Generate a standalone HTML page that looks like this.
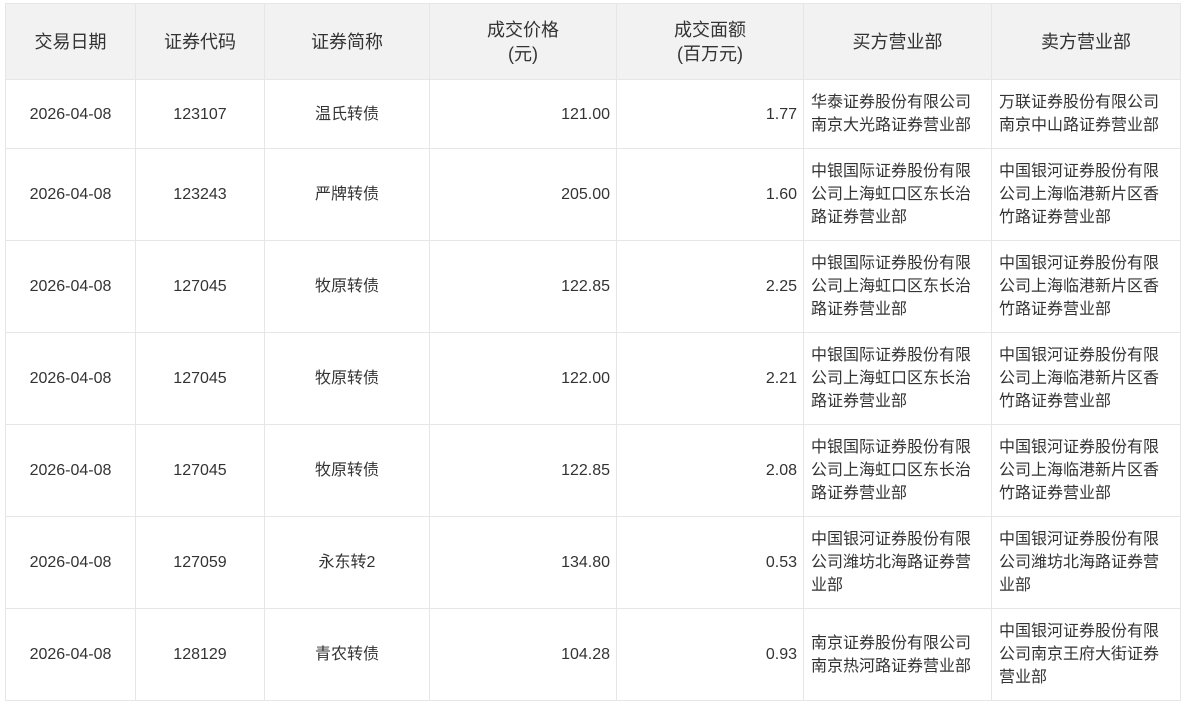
<!DOCTYPE html>
<html><head><meta charset="utf-8"><style>
body{margin:0;background:#fff;font-family:"Liberation Sans","Noto Sans CJK SC",sans-serif;color:#333;}
table{position:absolute;left:5px;top:3px;border-collapse:collapse;table-layout:fixed;width:1175px;}
td,th{border:1px solid #e6e6e6;font-size:16px;padding:0 6px;text-align:center;}
th{background:#f2f2f2;font-weight:normal;font-size:18px;height:75px;line-height:24px;color:#333}
td{line-height:23px}
tr.a td{height:68px}
tr.b td{height:91px}
.r{text-align:right}
.l{text-align:left;padding:0 12px 0 7px;word-break:break-all}
</style></head><body>
<table>
<colgroup><col style="width:130px"><col style="width:129px"><col style="width:165px"><col style="width:187px"><col style="width:187px"><col style="width:188px"><col style="width:189px"></colgroup>
<tr><th>交易日期</th><th>证券代码</th><th>证券简称</th><th>成交价格<br>(元)</th><th>成交面额<br>(百万元)</th><th>买方营业部</th><th>卖方营业部</th></tr>
<tr class="a"><td>2026-04-08</td><td>123107</td><td>温氏转债</td><td class="r">121.00</td><td class="r">1.77</td><td class="l">华泰证券股份有限公司南京大光路证券营业部</td><td class="l">万联证券股份有限公司南京中山路证券营业部</td></tr>
<tr class="b"><td>2026-04-08</td><td>123243</td><td>严牌转债</td><td class="r">205.00</td><td class="r">1.60</td><td class="l">中银国际证券股份有限公司上海虹口区东长治路证券营业部</td><td class="l">中国银河证券股份有限公司上海临港新片区香竹路证券营业部</td></tr>
<tr class="b"><td>2026-04-08</td><td>127045</td><td>牧原转债</td><td class="r">122.85</td><td class="r">2.25</td><td class="l">中银国际证券股份有限公司上海虹口区东长治路证券营业部</td><td class="l">中国银河证券股份有限公司上海临港新片区香竹路证券营业部</td></tr>
<tr class="b"><td>2026-04-08</td><td>127045</td><td>牧原转债</td><td class="r">122.00</td><td class="r">2.21</td><td class="l">中银国际证券股份有限公司上海虹口区东长治路证券营业部</td><td class="l">中国银河证券股份有限公司上海临港新片区香竹路证券营业部</td></tr>
<tr class="b"><td>2026-04-08</td><td>127045</td><td>牧原转债</td><td class="r">122.85</td><td class="r">2.08</td><td class="l">中银国际证券股份有限公司上海虹口区东长治路证券营业部</td><td class="l">中国银河证券股份有限公司上海临港新片区香竹路证券营业部</td></tr>
<tr class="b"><td>2026-04-08</td><td>127059</td><td>永东转2</td><td class="r">134.80</td><td class="r">0.53</td><td class="l">中国银河证券股份有限公司潍坊北海路证券营业部</td><td class="l">中国银河证券股份有限公司潍坊北海路证券营业部</td></tr>
<tr class="b"><td>2026-04-08</td><td>128129</td><td>青农转债</td><td class="r">104.28</td><td class="r">0.93</td><td class="l">南京证券股份有限公司南京热河路证券营业部</td><td class="l">中国银河证券股份有限公司南京王府大街证券营业部</td></tr>
</table>
</body></html>
